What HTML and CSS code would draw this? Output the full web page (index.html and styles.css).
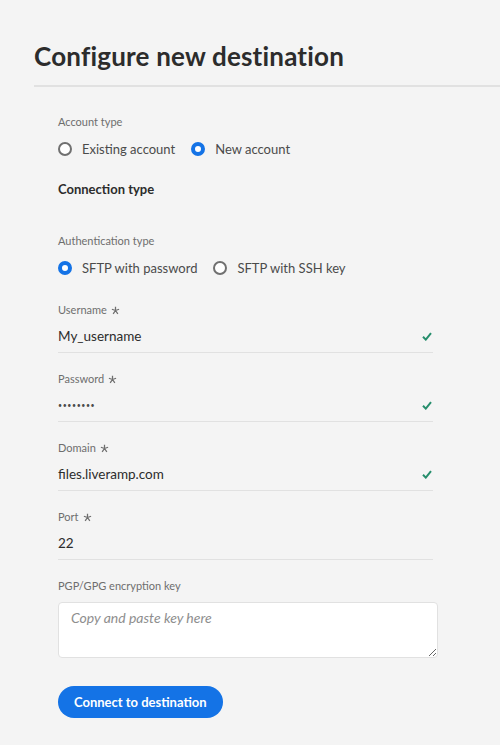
FILE: index.html
```html
<!DOCTYPE html>
<html>
<head>
<meta charset="utf-8">
<link rel="stylesheet" href="styles.css">
</head>
<body>
<header class="header">
  <h1 class="title">Configure new destination</h1>
</header>
<main class="form">
  <div class="label">Account type</div>
  <div class="radio-group">
    <label class="radio"><span class="radio-circle"></span><span>Existing account</span></label>
    <label class="radio"><span class="radio-circle is-checked"></span><span>New account</span></label>
  </div>

  <div class="section-title">Connection type</div>

  <div class="label label-auth">Authentication type</div>
  <div class="radio-group">
    <label class="radio"><span class="radio-circle is-checked"></span><span>SFTP with password</span></label>
    <label class="radio"><span class="radio-circle"></span><span>SFTP with SSH key</span></label>
  </div>

  <div class="field field-first">
    <div class="label">Username <svg class="req" viewBox="0 0 10 10"><path d="M5 0.8V5M5 5L1 3.6M5 5L9 3.6M5 5L2.4 8.8M5 5L7.6 8.8"/></svg></div>
    <div class="input"><span class="value">My_username</span><svg class="check" viewBox="0 0 10 9"><path d="M1 4.8L3.8 7.6L9 1.2"/></svg></div>
  </div>

  <div class="field">
    <div class="label">Password <svg class="req" viewBox="0 0 10 10"><path d="M5 0.8V5M5 5L1 3.6M5 5L9 3.6M5 5L2.4 8.8M5 5L7.6 8.8"/></svg></div>
    <div class="input"><span class="value dots">••••••••</span><svg class="check" viewBox="0 0 10 9"><path d="M1 4.8L3.8 7.6L9 1.2"/></svg></div>
  </div>

  <div class="field">
    <div class="label">Domain <svg class="req" viewBox="0 0 10 10"><path d="M5 0.8V5M5 5L1 3.6M5 5L9 3.6M5 5L2.4 8.8M5 5L7.6 8.8"/></svg></div>
    <div class="input"><span class="value">files.liveramp.com</span><svg class="check" viewBox="0 0 10 9"><path d="M1 4.8L3.8 7.6L9 1.2"/></svg></div>
  </div>

  <div class="field">
    <div class="label">Port <svg class="req" viewBox="0 0 10 10"><path d="M5 0.8V5M5 5L1 3.6M5 5L9 3.6M5 5L2.4 8.8M5 5L7.6 8.8"/></svg></div>
    <div class="input"><span class="value">22</span></div>
  </div>

  <div class="field">
    <div class="label">PGP/GPG encryption key</div>
    <textarea class="textarea" placeholder="Copy and paste key here"></textarea>
  </div>

  <button class="button">Connect to destination</button>
</main>
</body>
</html>
```

FILE: styles.css
```css
* { box-sizing: border-box; }
html, body { margin: 0; padding: 0; }
body {
  background: #f4f4f4;
  font-family: "Lato", "Open Sans", sans-serif;
  color: #323232;
  width: 500px;
  height: 745px;
  overflow: hidden;
}
.header {
  margin-left: 34px;
  padding-top: 38px;
  border-bottom: 2px solid #e1e1e1;
  height: 87px;
}
.title {
  margin: 0;
  font-size: 26px;
  line-height: 36px;
  font-weight: 700;
  color: #2c2c2c;
  letter-spacing: 0.2px;
}
.form {
  padding-left: 58px;
  padding-top: 27px;
}
.label {
  font-size: 11px;
  line-height: 16px;
  color: #6e6e6e;
  display: flex;
  align-items: center;
  gap: 4px;
}
.req {
  width: 9px;
  height: 9px;
  fill: none;
  stroke: #6e6e6e;
  stroke-width: 1.4;
}
.radio-group {
  display: flex;
  gap: 16px;
  margin-top: 6px;
  height: 25px;
  align-items: center;
}
.radio {
  display: flex;
  align-items: center;
  gap: 10px;
  font-size: 13px;
  color: #4b4b4b;
}
.radio-circle {
  width: 14px;
  height: 14px;
  border-radius: 50%;
  border: 2px solid #707070;
  background: #fff;
  flex: none;
}
.radio-circle.is-checked {
  border: 4.5px solid #1473e6;
}
.section-title {
  margin-top: 18px;
  font-size: 13px;
  line-height: 20px;
  font-weight: 700;
  color: #2c2c2c;
}
.label-auth {
  margin-top: 34px;
}
.field {
  margin-top: 18px;
  width: 375px;
}
.field-first {
  margin-top: 22px;
}
.input {
  height: 35px;
  border-bottom: 1px solid #e1e1e1;
  display: flex;
  align-items: center;
  justify-content: space-between;
  padding-top: 2px;
}
.value {
  font-size: 13.5px;
  color: #2c2c2c;
}
.value.dots {
  font-size: 7px;
  letter-spacing: 0.6px;
  color: #4b4b4b;
}
.check {
  width: 10px;
  height: 9px;
  margin-right: 1px;
  fill: none;
  stroke: #268e6c;
  stroke-width: 2;
}
.textarea {
  display: block;
  margin-top: 8px;
  width: 380px;
  height: 56px;
  background: #fff;
  border: 1px solid #e1e1e1;
  border-radius: 4px;
  padding: 6px 12px;
  font-family: "Lato", sans-serif;
  font-size: 14px;
  resize: vertical;
}
.textarea::placeholder {
  font-style: italic;
  color: #8e8e8e;
}
.button {
  display: block;
  margin-top: 28px;
  height: 32px;
  padding: 0 16px;
  border: none;
  border-radius: 16px;
  background: #1473e6;
  color: #fff;
  font-family: "Lato", sans-serif;
  font-size: 13px;
  font-weight: 700;
}
```
